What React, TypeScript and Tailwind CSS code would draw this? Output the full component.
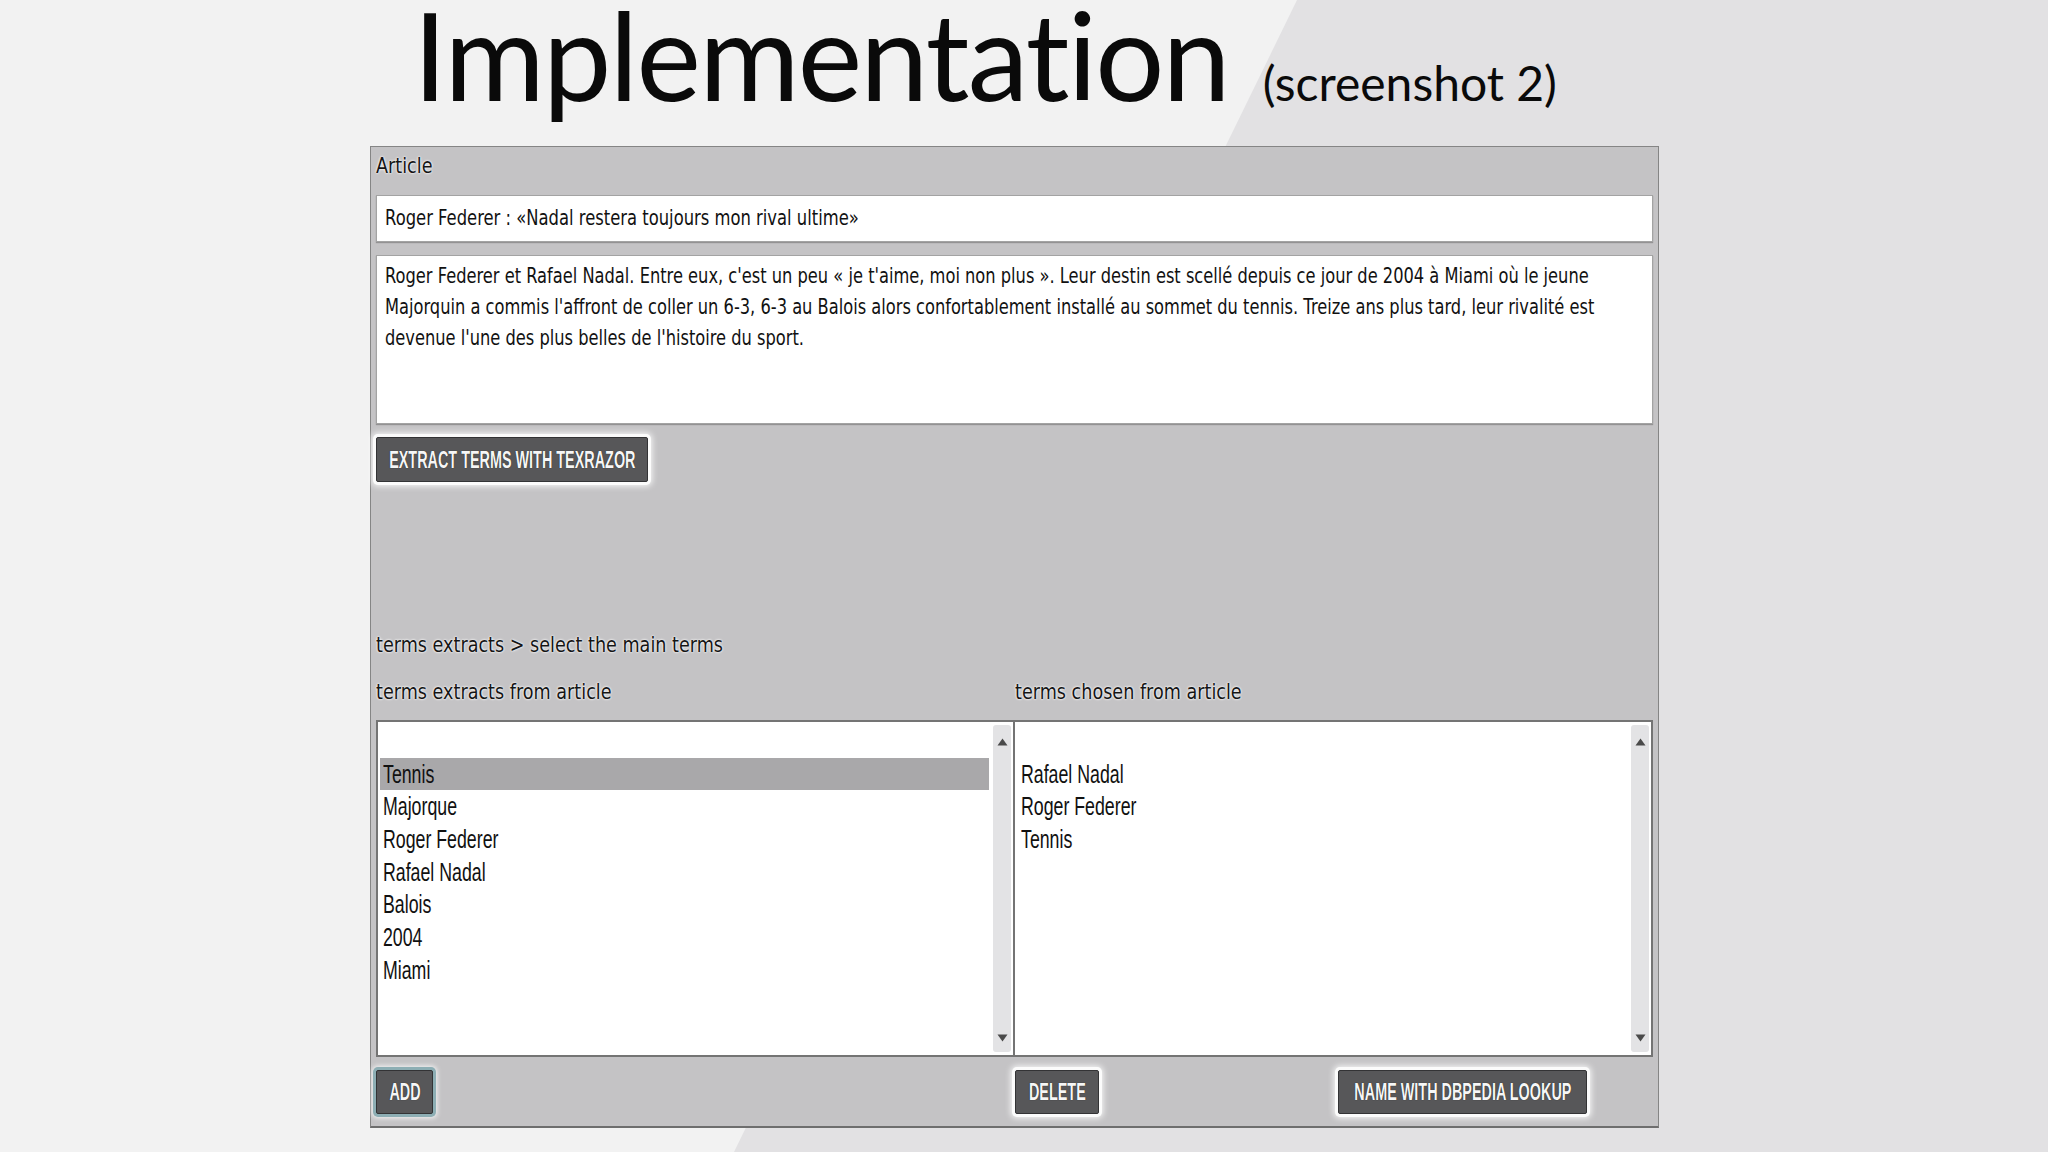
import React from "react";

const DV = "font-['DejaVu_Sans',Verdana,sans-serif]";
const AR = "font-['Liberation_Sans',Arial,sans-serif]";

function Label({ children }: { children: React.ReactNode }) {
  return (
    <div className={`h-[26px] leading-[26px] text-[22px] text-[#151515] ${DV} [text-shadow:0_0_3px_#fff,0_0_2px_#fff]`}>
      <span className="inline-block origin-left scale-x-[0.8] whitespace-nowrap">{children}</span>
    </div>
  );
}

function Btn({ children, w, add }: { children: React.ReactNode; w: string; add?: boolean }) {
  return (
    <div
      className={`${w} h-[44px] flex items-center justify-center bg-[#575759] border border-[#333335] rounded-[2px] ${
        add
          ? "shadow-[0_0_0_3px_#8daeb4,0_0_5px_4px_rgba(255,255,255,0.85)]"
          : "shadow-[0_0_0_3px_#fbfbfb,0_0_6px_4px_rgba(255,255,255,0.9)]"
      }`}
    >
      <span
        className={`inline-block origin-center scale-x-[0.6] whitespace-nowrap text-[24px] leading-none font-bold text-[#f6f6f6] ${AR} [text-shadow:0_0_1px_#000]`}
      >
        {children}
      </span>
    </div>
  );
}

function Arrow({ up }: { up?: boolean }) {
  return (
    <svg width="11" height="8" viewBox="0 0 11 8">
      {up ? <polygon points="5.5,0.5 10.5,7.5 0.5,7.5" fill="#4a4a4a" /> : <polygon points="0.5,0.5 10.5,0.5 5.5,7.5" fill="#4a4a4a" />}
    </svg>
  );
}

function Scroll() {
  return (
    <div className="w-[18px] my-[3px] ml-[4px] mr-[2px] rounded-[3px] bg-[#e3e3e5] flex flex-col items-center justify-between pt-[13px] pb-[10px]">
      <Arrow up />
      <Arrow />
    </div>
  );
}

function Item({ children, sel }: { children?: React.ReactNode; sel?: boolean }) {
  return (
    <div className={`h-[32.67px] leading-[32.67px] pl-[3px] text-[25px] text-[#111] ${AR} ${sel ? "bg-[#a9a8aa]" : ""}`}>
      <span className="inline-block origin-left scale-x-[0.71] whitespace-nowrap">{children}</span>
    </div>
  );
}

export default function App() {
  const left = ["Majorque", "Roger Federer", "Rafael Nadal", "Balois", "2004", "Miami"];
  const right = ["Rafael Nadal", "Roger Federer", "Tennis"];
  return (
    <div className="relative w-[2048px] h-[1152px] overflow-hidden bg-[#f2f2f2]">
      <svg className="absolute inset-0" width="2048" height="1152" viewBox="0 0 2048 1152">
        <polygon points="1297,0 2048,0 2048,1152 734,1152" fill="#e2e1e3" />
      </svg>

      <div className="relative flex flex-col">
        {/* Heading */}
        <div className="h-[146px] pl-[413px] flex items-baseline font-['Lato',sans-serif] text-[#0a0a0a] [font-variant-ligatures:none]">
          <span className="text-[122px] leading-[108px] tracking-[-1.8px]">Implementation</span>
          <span className="ml-[34px] text-[48px] leading-[58px]">(screenshot 2)</span>
        </div>

        {/* Panel */}
        <div className="ml-[370px] w-[1289px] h-[982px] bg-[#c4c3c5] border border-[#858585] border-b-2 border-b-[#6e6e6e] px-[5px] pt-[6px] flex flex-col">
          <Label>Article</Label>

          <div className={`mt-[16px] h-[47px] bg-white border border-[#a3a3a3] shadow-[0_1px_1px_rgba(0,0,0,0.25)] flex items-center pl-[8px] text-[21px] text-[#111] ${DV}`}>
            <span className="inline-block origin-left scale-x-[0.78] whitespace-nowrap">
              Roger Federer : «Nadal restera toujours mon rival ultime»
            </span>
          </div>

          <div className={`mt-[13px] h-[169px] bg-white border border-[#a3a3a3] shadow-[0_1px_1px_rgba(0,0,0,0.25)] overflow-hidden pl-[8px] pt-[5px] text-[21px] leading-[31px] text-[#111] ${DV}`}>
            <span className="inline-block origin-left scale-x-[0.774] whitespace-nowrap">
              Roger Federer et Rafael Nadal. Entre eux, c'est un peu « je t'aime, moi non plus ». Leur destin est scellé depuis ce jour de 2004 à Miami où le jeune
              <br />
              Majorquin a commis l'affront de coller un 6-3, 6-3 au Balois alors confortablement installé au sommet du tennis. Treize ans plus tard, leur rivalité est
              <br />
              devenue l'une des plus belles de l'histoire du sport.
            </span>
          </div>

          <div className="mt-[13px] flex">
            <Btn w="w-[272px] h-[45px]">EXTRACT TERMS WITH TEXRAZOR</Btn>
          </div>

          <div className="mt-[150px]">
            <Label>terms extracts &gt; select the main terms</Label>
          </div>

          <div className="mt-[21px] grid grid-cols-[639px_638px]">
            <Label>terms extracts from article</Label>
            <div>
              <Label>terms chosen from article</Label>
            </div>
          </div>

          <div className="mt-[15px] h-[337px] grid grid-cols-[639px_638px]">
            <div className="flex bg-white border-2 border-[#747474]">
              <div className="flex-1 pl-[2px] pt-[3px]">
                <Item />
                <Item sel>Tennis</Item>
                {left.map((t) => (
                  <Item key={t}>{t}</Item>
                ))}
              </div>
              <Scroll />
            </div>
            <div className="flex bg-white border-2 border-l-0 border-[#747474]">
              <div className="flex-1 pl-[3px] pt-[3px]">
                <Item />
                {right.map((t) => (
                  <Item key={t}>{t}</Item>
                ))}
              </div>
              <Scroll />
            </div>
          </div>

          <div className="mt-[13px] grid grid-cols-[639px_638px]">
            <div className="flex">
              <Btn w="w-[57px]" add>
                ADD
              </Btn>
            </div>
            <div className="flex">
              <div>
                <Btn w="w-[84px]">DELETE</Btn>
              </div>
              <div className="ml-[239px]">
                <Btn w="w-[249px]">NAME WITH DBPEDIA LOOKUP</Btn>
              </div>
            </div>
          </div>
        </div>
      </div>
    </div>
  );
}
